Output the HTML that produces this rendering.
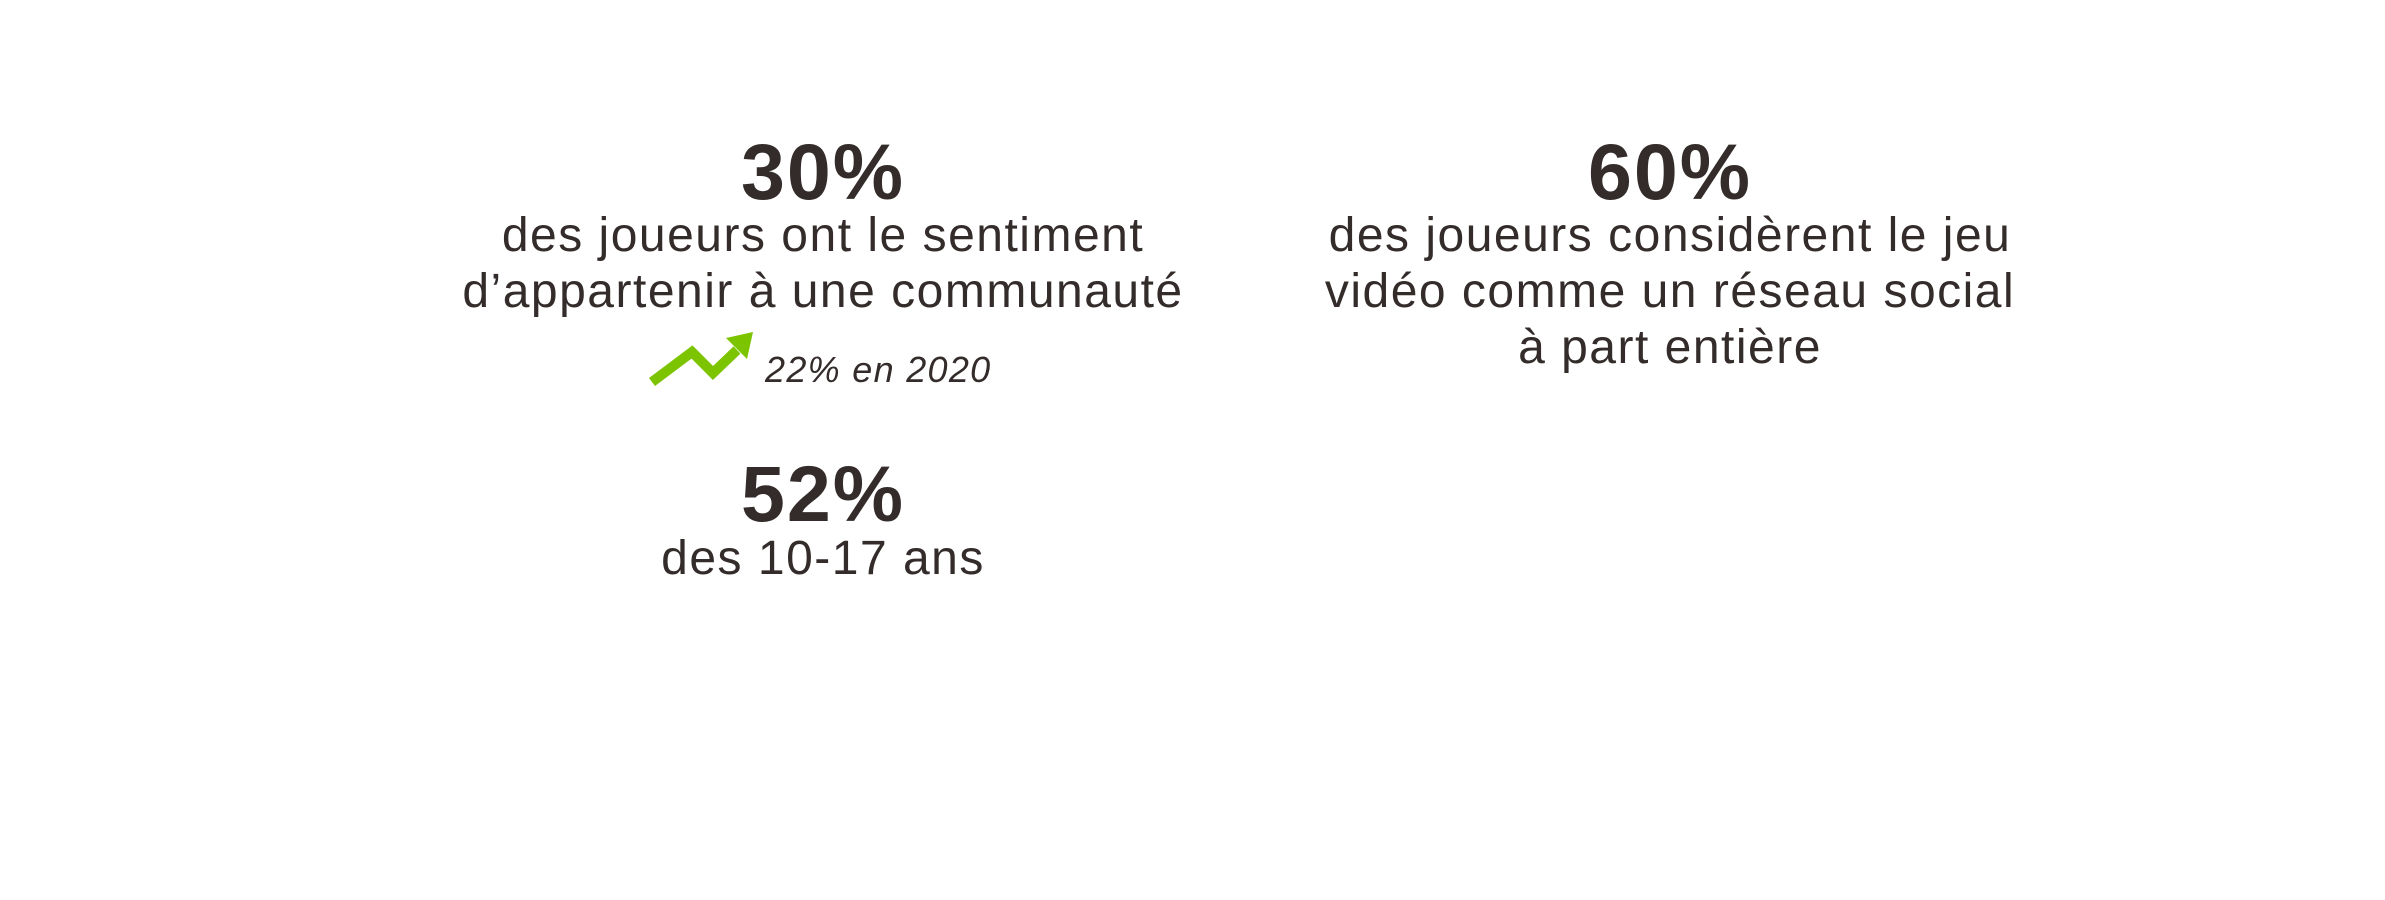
<!DOCTYPE html>
<html><head><meta charset="utf-8"><style>
body{margin:0;width:2385px;height:900px;background:#fff;position:relative;overflow:hidden;font-family:"Liberation Sans",sans-serif;color:#332c2b}
.c{position:absolute;text-align:center;white-space:nowrap}
.big{font-size:79px;font-weight:bold;line-height:85px;letter-spacing:2px}
.t{font-size:48px;line-height:56px;letter-spacing:1.5px}
</style></head><body>
<div class="c big" style="left:523px;width:600px;top:129px">30%</div>
<div class="c t" style="left:373px;width:900px;top:208px">des joueurs ont le sentiment<br>d’appartenir à une communauté</div>
<svg style="position:absolute;left:640px;top:325px" width="120" height="65" viewBox="640 325 120 65">
<polyline points="652,382 692,352 713,373 737,350" fill="none" stroke="#7dc400" stroke-width="10"/>
<polygon points="753,332 726,338 747,359" fill="#7dc400"/>
</svg>
<div style="position:absolute;left:765px;top:352px;font-size:36px;line-height:36px;font-style:italic;white-space:nowrap;letter-spacing:1.3px">22% en 2020</div>
<div class="c big" style="left:523px;width:600px;top:451px">52%</div>
<div class="c t" style="left:373px;width:900px;top:531px">des 10-17 ans</div>
<div class="c big" style="left:1370px;width:600px;top:129px">60%</div>
<div class="c t" style="left:1220px;width:900px;top:208px">des joueurs considèrent le jeu<br>vidéo comme un réseau social<br>à part entière</div>
</body></html>
